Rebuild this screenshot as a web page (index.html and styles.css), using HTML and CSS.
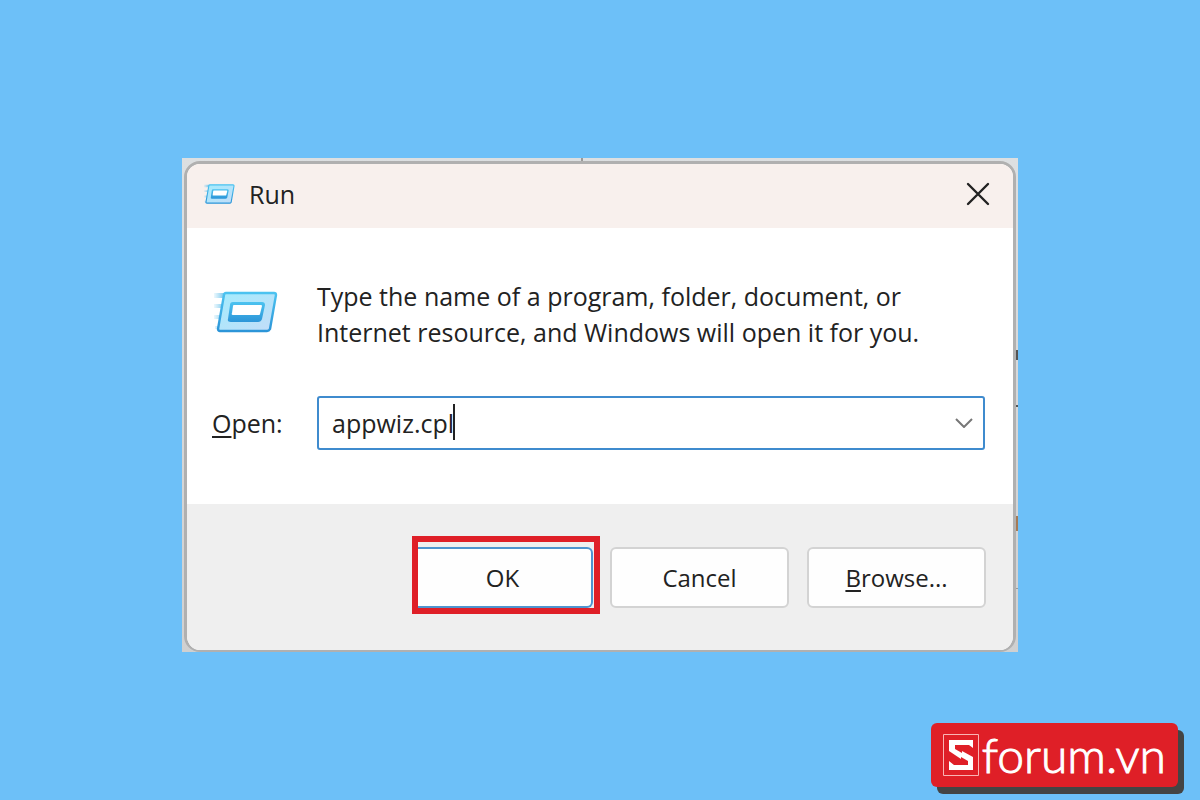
FILE: index.html
```html
<!DOCTYPE html>
<html lang="en">
<head>
<meta charset="utf-8">
<meta name="viewport" content="width=device-width, initial-scale=1">
<title>Run</title>
<link rel="stylesheet" href="styles.css">
</head>
<body>
<svg class="defs" aria-hidden="true">
  <defs>
    <linearGradient id="edge" x1="0" y1="0" x2="0" y2="1"><stop offset="0" stop-color="#4cc3f0"/><stop offset="1" stop-color="#2c95d8"/></linearGradient>
    <linearGradient id="face" x1="0" y1="0" x2="1" y2="1"><stop offset="0" stop-color="#a3ecfd"/><stop offset="1" stop-color="#c3dcf8"/></linearGradient>
    <linearGradient id="trail" x1="0" y1="0" x2="1" y2="0"><stop offset="0" stop-color="#7fd0f2" stop-opacity="0"/><stop offset="1" stop-color="#62b9e6"/></linearGradient>
    <symbol id="run-icon" viewBox="0 0 64 42">
      <path d="M-2 2h14v5H-2zM-1 13h12v4H-1zM0 24h9v4H0zM1 35h6v3H1z" fill="url(#trail)"/>
      <path d="M12 2h48q2 0 2 2l-6 34q-1 2-3 2H6q-2 0-2-2L10 4q0-2 2-2z" fill="url(#face)" stroke="url(#edge)" stroke-width="2.4"/>
      <path d="M19 11h29q3 0 3 3l-3 14q-1 3-4 3H17q-4 0-3-3l2-14q0-3 3-3z" fill="url(#edge)"/>
      <path d="M20 14h27q1 0 1 1l-2 8q0 1-1 1H19q-2 0-1-2l1-7q0-1 1-1z" fill="#fff"/>
    </symbol>
  </defs>
</svg>
<main class="stage">
  <div class="shot">
    <i class="mark mark-top"></i>
    <i class="mark mark-a"></i>
    <i class="mark mark-b"></i>
    <i class="mark mark-c"></i>
    <i class="mark mark-d"></i>
    <section class="dialog" role="dialog" aria-labelledby="title">
      <header class="titlebar">
        <svg class="small-icon" aria-hidden="true"><use href="#run-icon"/></svg>
        <h1 class="title" id="title">Run</h1>
        <button class="close" type="button" aria-label="Close">
          <svg viewBox="0 0 24 24" width="24" height="24" fill="none" stroke="#222" stroke-width="2.4" stroke-linecap="round"><path d="M2 2l20 20M22 2L2 22"/></svg>
        </button>
      </header>
      <div class="content">
        <svg class="large-icon" aria-hidden="true"><use href="#run-icon"/></svg>
        <p class="message">Type the name of a program, folder, document, or<br>Internet resource, and Windows will open it for you.</p>
        <label class="label" for="command"><u>O</u>pen:</label>
        <div class="combo">
          <input class="command" id="command" type="text" value="appwiz.cpl">
          <i class="caret"></i>
          <button class="arrow" type="button" aria-label="Show history">
            <svg viewBox="0 0 18 10" width="18" height="10" fill="none" stroke="#777" stroke-width="2"><path d="M1 1l8 8 8-8"/></svg>
          </button>
        </div>
      </div>
      <footer class="actions">
        <div class="highlight"><button class="button primary" type="button">OK</button></div>
        <button class="button" type="button">Cancel</button>
        <button class="button" type="button"><u>B</u>rowse...</button>
      </footer>
    </section>
  </div>
</main>
<div class="brand">
  <svg class="brand-mark" viewBox="0 0 36 42" aria-hidden="true">
    <path d="M.5.5h35v41H.5z" fill="none" stroke="#f9b4b4"/>
    <path d="M6 6h24v8l-4-3H12v4l7 4v-2l11 6v13H6V27l5 4h14v-4l-7-4v2L6 17z" fill="#fff"/>
  </svg>
  <span class="brand-name">forum.vn</span>
</div>
</body>
</html>
```
FILE: styles.css
```css
* { box-sizing: border-box; }

body {
  margin: 0;
  background: #6dc0f8;
  color: #222;
  font-family: "Open Sans", "Noto Sans", sans-serif;
  font-size: 25px;
  line-height: 36px;
}

.defs { position: absolute; width: 0; height: 0; }

.stage {
  display: flex;
  align-items: center;
  justify-content: center;
  min-height: 100vh;
  padding-top: 10px;
}

.shot {
  position: relative;
  width: 100%;
  max-width: 836px;
  padding: 3px 2px 0;
  background: linear-gradient(#dcdfe1, #d0d0d0);
}

.mark { position: absolute; right: 0; width: 3px; background: #555; }
.mark-top { top: 0; right: auto; left: 399px; width: 2px; height: 4px; background: #999; }
.mark-a { top: 192px; height: 10px; }
.mark-b { top: 247px; height: 2px; }
.mark-c { top: 358px; height: 15px; background: #a47b58; }
.mark-d { top: 430px; height: 1px; background: #999; }

.dialog {
  position: relative;
  overflow: hidden;
  border: 2px solid #b0b0b0;
  border-width: 3px 3px 2px;
  border-radius: 16px;
  background: #fff;
}

.titlebar {
  display: flex;
  align-items: center;
  gap: 14px;
  height: 64px;
  padding: 0 23px 4px 17px;
  background: #f8f0ed;
}

.small-icon { width: 31px; height: 22px; }
.large-icon, .small-icon { overflow: visible; }
.title { flex: 1; margin: 0; font-size: 25px; font-weight: 400; }

.close, .arrow {
  display: flex;
  padding: 0;
  border: 0;
  background: none;
}

.content {
  display: grid;
  grid-template-columns: 76px 1fr;
  align-items: center;
  gap: 46px 29px;
  padding: 50px 28px 54px 25px;
}

.large-icon { width: 64px; height: 42px; margin: 0 0 4px 2px; }
.message { margin: 0; }
u { text-decoration-thickness: 2px; text-underline-offset: 3px; }

.combo {
  position: relative;
  display: flex;
  align-items: center;
  height: 54px;
  padding: 0 10px 0 13px;
  border: 2px solid #3f8bce;
  border-radius: 3px;
}

.command {
  flex: 1;
  min-width: 0;
  padding: 0;
  border: 0;
  outline: 0;
  background: none;
  color: inherit;
  font: inherit;
}

.caret { position: absolute; left: 134px; top: 6px; width: 2px; height: 36px; background: #222; }

.actions {
  display: flex;
  align-items: flex-end;
  justify-content: flex-end;
  gap: 18px;
  padding: 32px 27px 42px;
  background: #efefef;
}

.highlight {
  display: flex;
  width: 188px;
  margin: 0 -8px -6px 0;
  padding: 5px 1px 0 0;
  border: 6px solid #df1f27;
}

.button {
  width: 179px;
  height: 61px;
  padding: 0;
  border: 2px solid #d3d3d3;
  border-radius: 6px;
  background: #fefefe;
  color: inherit;
  font: inherit;
  font-size: 24px;
}

.primary { width: 100%; padding-right: 4px; border: 2px solid #4e94cf; border-left: 0; border-radius: 0 6px 6px 0; }

.brand {
  position: absolute;
  right: 22px;
  bottom: 13px;
  display: flex;
  align-items: center;
  gap: 3px;
  height: 64px;
  padding: 0 12px;
  border-radius: 6px;
  background: #df1f27;
  box-shadow: 6px 7px 0 #444;
  color: #fff;
}

.brand-mark { width: 36px; height: 42px; }
.brand-name { font-family: Lato, sans-serif; font-size: 48px; font-weight: 300; line-height: 64px; -webkit-text-stroke: 1px #fff; }
```
